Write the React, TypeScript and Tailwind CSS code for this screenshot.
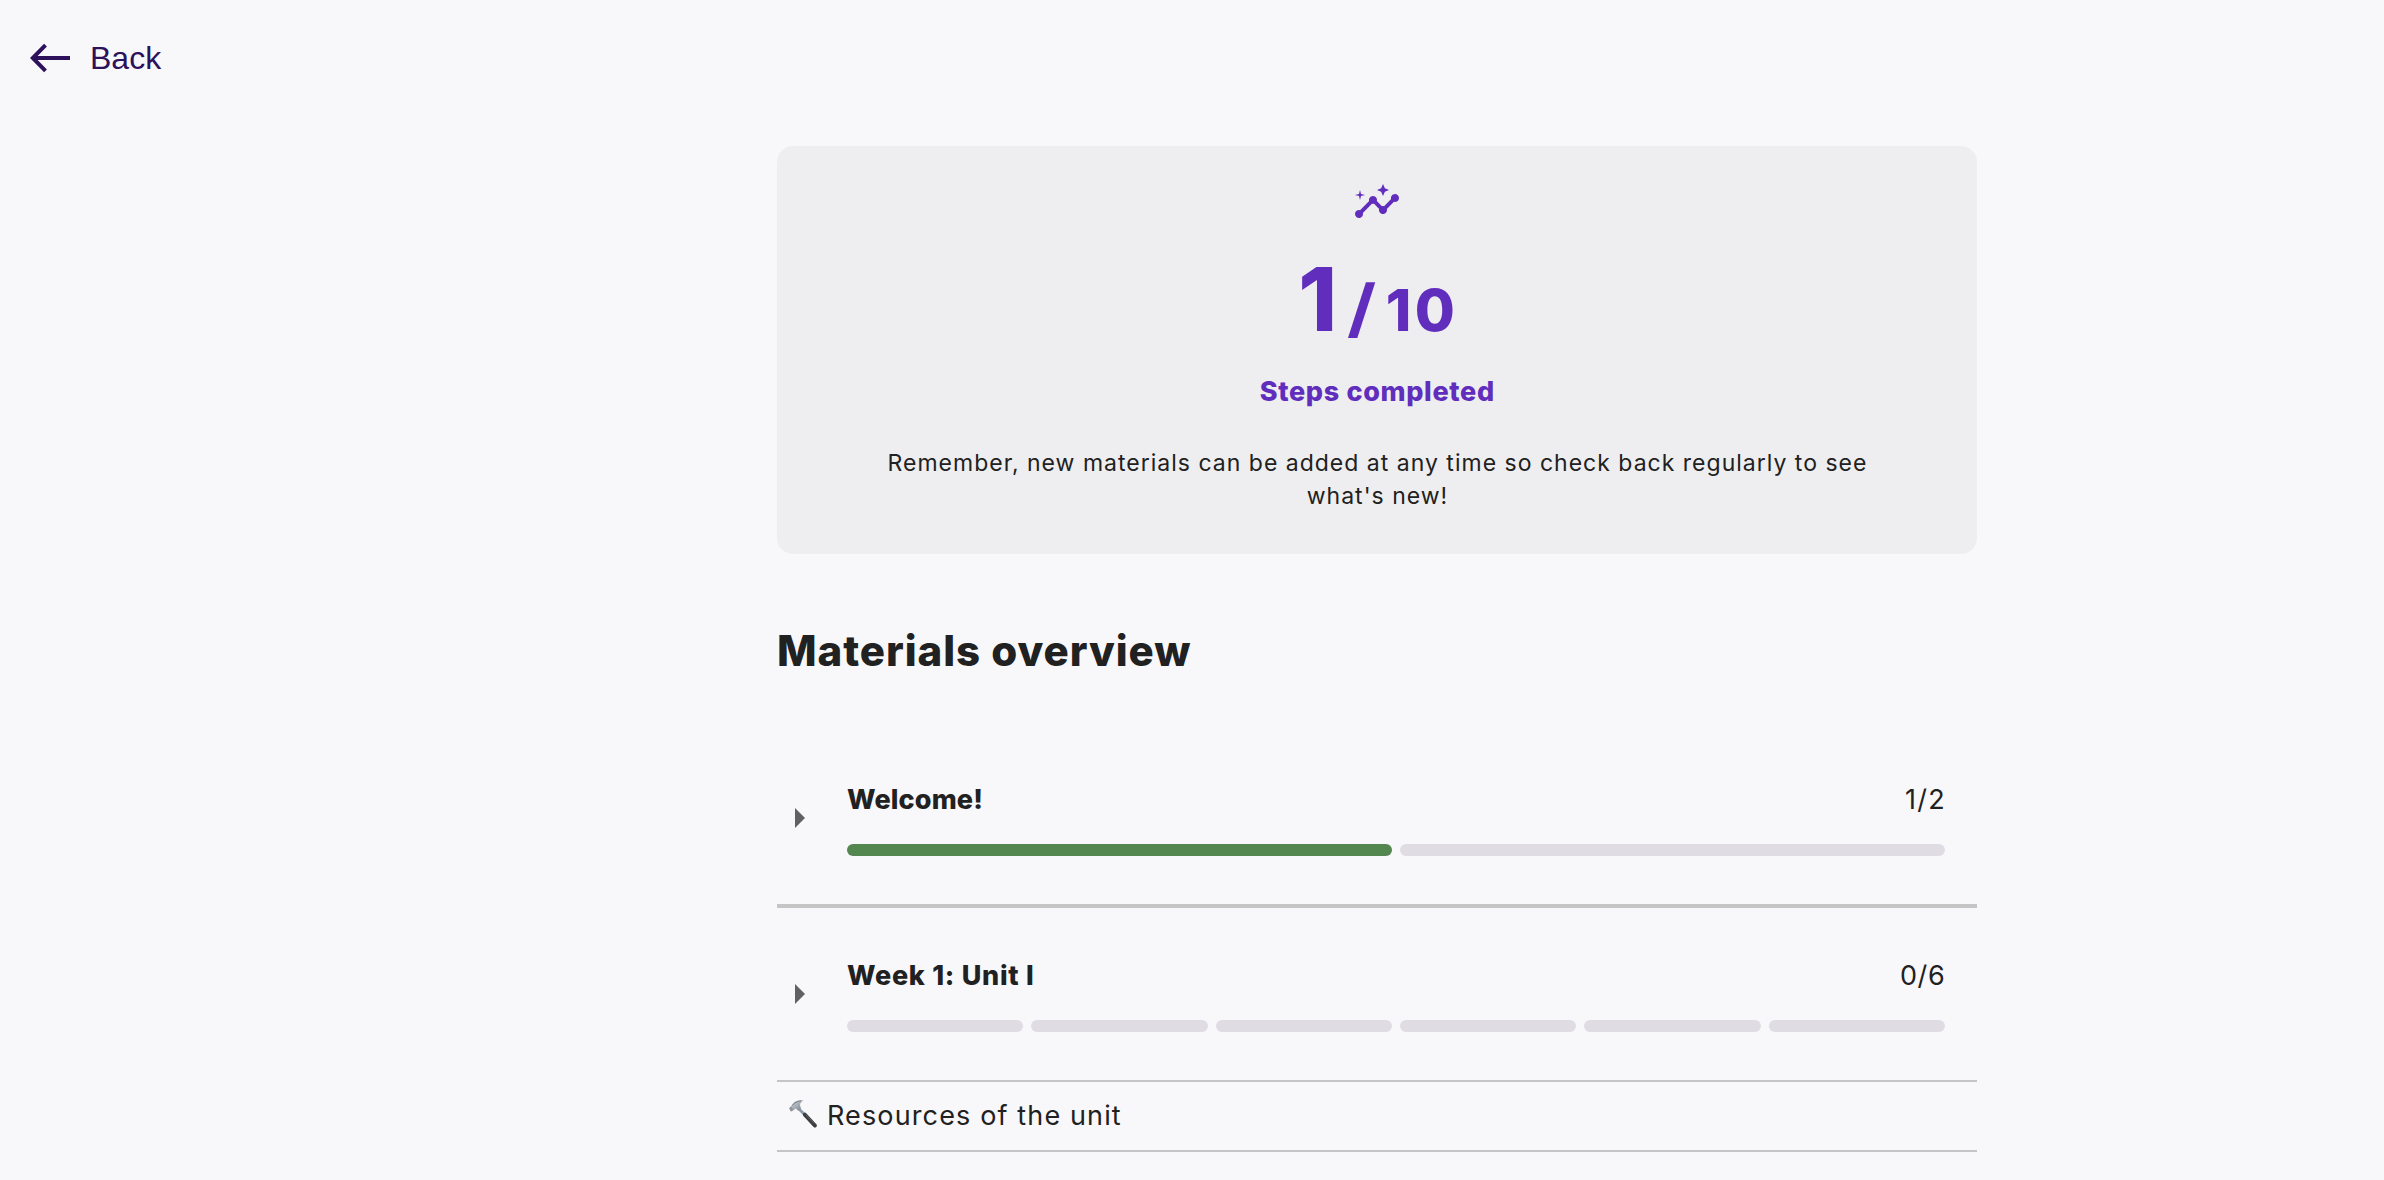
type Section = { title: string; done: number; total: number; titleClass: string; countClass: string; rowClass: string };

const sections: Section[] = [
  {
    title: 'Welcome!',
    done: 1,
    total: 2,
    titleClass: 'tracking-[0.15px]',
    countClass: 'tracking-[1.3px] -mr-[1px]',
    rowClass: 'border-b-4',
  },
  {
    title: 'Week 1: Unit I',
    done: 0,
    total: 6,
    titleClass: 'tracking-[0.72px]',
    countClass: 'tracking-[0.7px] -mr-[0.5px]',
    rowClass: 'border-b-2',
  },
];

function BackArrow() {
  return (
    <svg className="h-[30px] w-[42px]" viewBox="0 0 42 30" fill="none" stroke="#2d115a" strokeWidth="4">
      <path d="M40 15H3" />
      <path d="M15.5 2.2L2.8 15L15.5 27.8" />
    </svg>
  );
}

function InsightsIcon() {
  return (
    <svg className="h-12 w-12" viewBox="0 0 24 24" fill="#612dbd">
      <path d="M21 8c-1.45 0-2.26 1.44-1.93 2.51l-3.55 3.56c-.3-.09-.74-.09-1.04 0l-2.55-2.55C12.27 10.45 11.46 9 10 9c-1.45 0-2.27 1.44-1.93 2.52l-4.56 4.55C2.44 15.74 1 16.55 1 18c0 1.1.9 2 2 2 1.45 0 2.26-1.44 1.93-2.51l4.55-4.56c.3.09.74.09 1.04 0l2.55 2.55C12.73 16.55 13.54 18 15 18c1.45 0 2.27-1.44 1.93-2.52l3.56-3.55c1.07.33 2.51-.48 2.51-1.93 0-1.1-.9-2-2-2z" />
      <path d="M15 9l.94-2.07L18 6l-2.06-.93L15 3l-.92 2.07L12 6l2.08.93zM3.5 11L4 9l2-.5L4 8l-.5-2L3 8l-2 .5L3 9z" />
    </svg>
  );
}

function HammerIcon() {
  return (
    <svg className="-mt-[5px] h-[30px] w-[30px]" viewBox="0 0 30 30">
      <defs>
        <linearGradient id="steel" x1="0" y1="0" x2="1" y2="1">
          <stop offset="0" stopColor="#c9d0d8" />
          <stop offset="0.5" stopColor="#a9afb8" />
          <stop offset="1" stopColor="#6f757e" />
        </linearGradient>
      </defs>
      <path d="M10.5 9.5L18 17" stroke="#8d99a8" strokeWidth="2.8" />
      <path d="M16.8 15.6L27 26.6" stroke="#3d3d40" strokeWidth="3.8" strokeLinecap="round" />
      <path d="M18 16L26 24.4" stroke="#66666a" strokeWidth="0.8" strokeLinecap="round" />
      <path
        d="M1.2 9.2L3.6 6.6C5.2 3.2 8.6 0.8 15.6 1.4C13.4 2.4 12 4 12 6.2L13 9.4L10.4 11.8L7.6 9.6L4.6 12L2.8 12.4Z"
        fill="url(#steel)"
      />
      <path d="M4.2 6.6C6.2 3.8 9 2 13.2 1.9" stroke="#70757d" strokeWidth="0.9" fill="none" />
      <path d="M1.2 9.2L3 7.4L5 10.4L3 12.4Z" fill="#8c929b" />
    </svg>
  );
}

function SectionRow({ title, done, total, titleClass, countClass, rowClass }: Section) {
  return (
    <div className={`flex items-center border-[#c5c5c5] pr-8 ${rowClass}`}>
      <svg className="ml-[18px] h-5 w-[10px]" viewBox="0 0 10 20" fill="#616161">
        <path d="M0 0L10 10L0 20Z" />
      </svg>
      <div className="ml-[42px] flex-1 pt-[50px] pb-12">
        <div className="flex justify-between text-[27px] leading-9">
          <span className={`font-extrabold ${titleClass}`}>{title}</span>
          <span className={countClass}>
            {done}/{total}
          </span>
        </div>
        <div className="mt-[26px] flex gap-2">
          {Array.from({ length: total }, (_, i) => (
            <div key={i} className={`h-3 flex-1 rounded-full ${i < done ? 'bg-[#54874f]' : 'bg-[#dfdde3]'}`} />
          ))}
        </div>
      </div>
    </div>
  );
}

export default function App() {
  return (
    <div className="h-[1180px] overflow-hidden bg-[#f8f8fb] font-['Inter',sans-serif] text-[#212121]">
      <header className="flex h-[116px] items-center gap-[18px] pl-[30px] font-['Liberation_Sans',sans-serif] text-[32px] text-[#2d115a]">
        <BackArrow />
        <span>Back</span>
      </header>

      <main className="mt-[30px] ml-[777px] w-[1200px]">
        <section className="flex h-[408px] flex-col items-center rounded-2xl bg-[#eeeef0] pt-8">
          <InsightsIcon />
          <div className="mt-[25px] mr-[1px] flex items-baseline font-extrabold text-[#612dbd]">
            <span className="text-[88px] leading-[96px]">1</span>
            <span className="ml-[12px] -skew-x-[3deg] text-[64px] leading-none">/</span>
            <span className="-mr-[3.4px] ml-[11px] text-[58px] leading-none tracking-[3.4px]">10</span>
          </div>
          <p className="mt-[27px] -mr-[0.5px] text-[27px] leading-9 font-extrabold tracking-[0.67px] text-[#612dbd]">
            Steps completed
          </p>
          <p className="mt-[37px] w-[1000px] pl-px text-center text-[23px] leading-[33px] tracking-[1.006px]">
            Remember, new materials can be added at any time so check back regularly to see what's new!
          </p>
        </section>

        <h2 className="mt-[73px] text-[42px] leading-[48px] font-extrabold tracking-[0.95px]">Materials overview</h2>

        <div className="mt-[57px]">
          {sections.map((s) => (
            <SectionRow key={s.title} {...s} />
          ))}
          <div className="flex h-[70px] items-center border-b-2 border-[#c5c5c5] pl-[11px]">
            <HammerIcon />
            <span className="ml-[9px] text-[27px] leading-9 tracking-[1.13px]">Resources of the unit</span>
          </div>
        </div>
      </main>
    </div>
  );
}
